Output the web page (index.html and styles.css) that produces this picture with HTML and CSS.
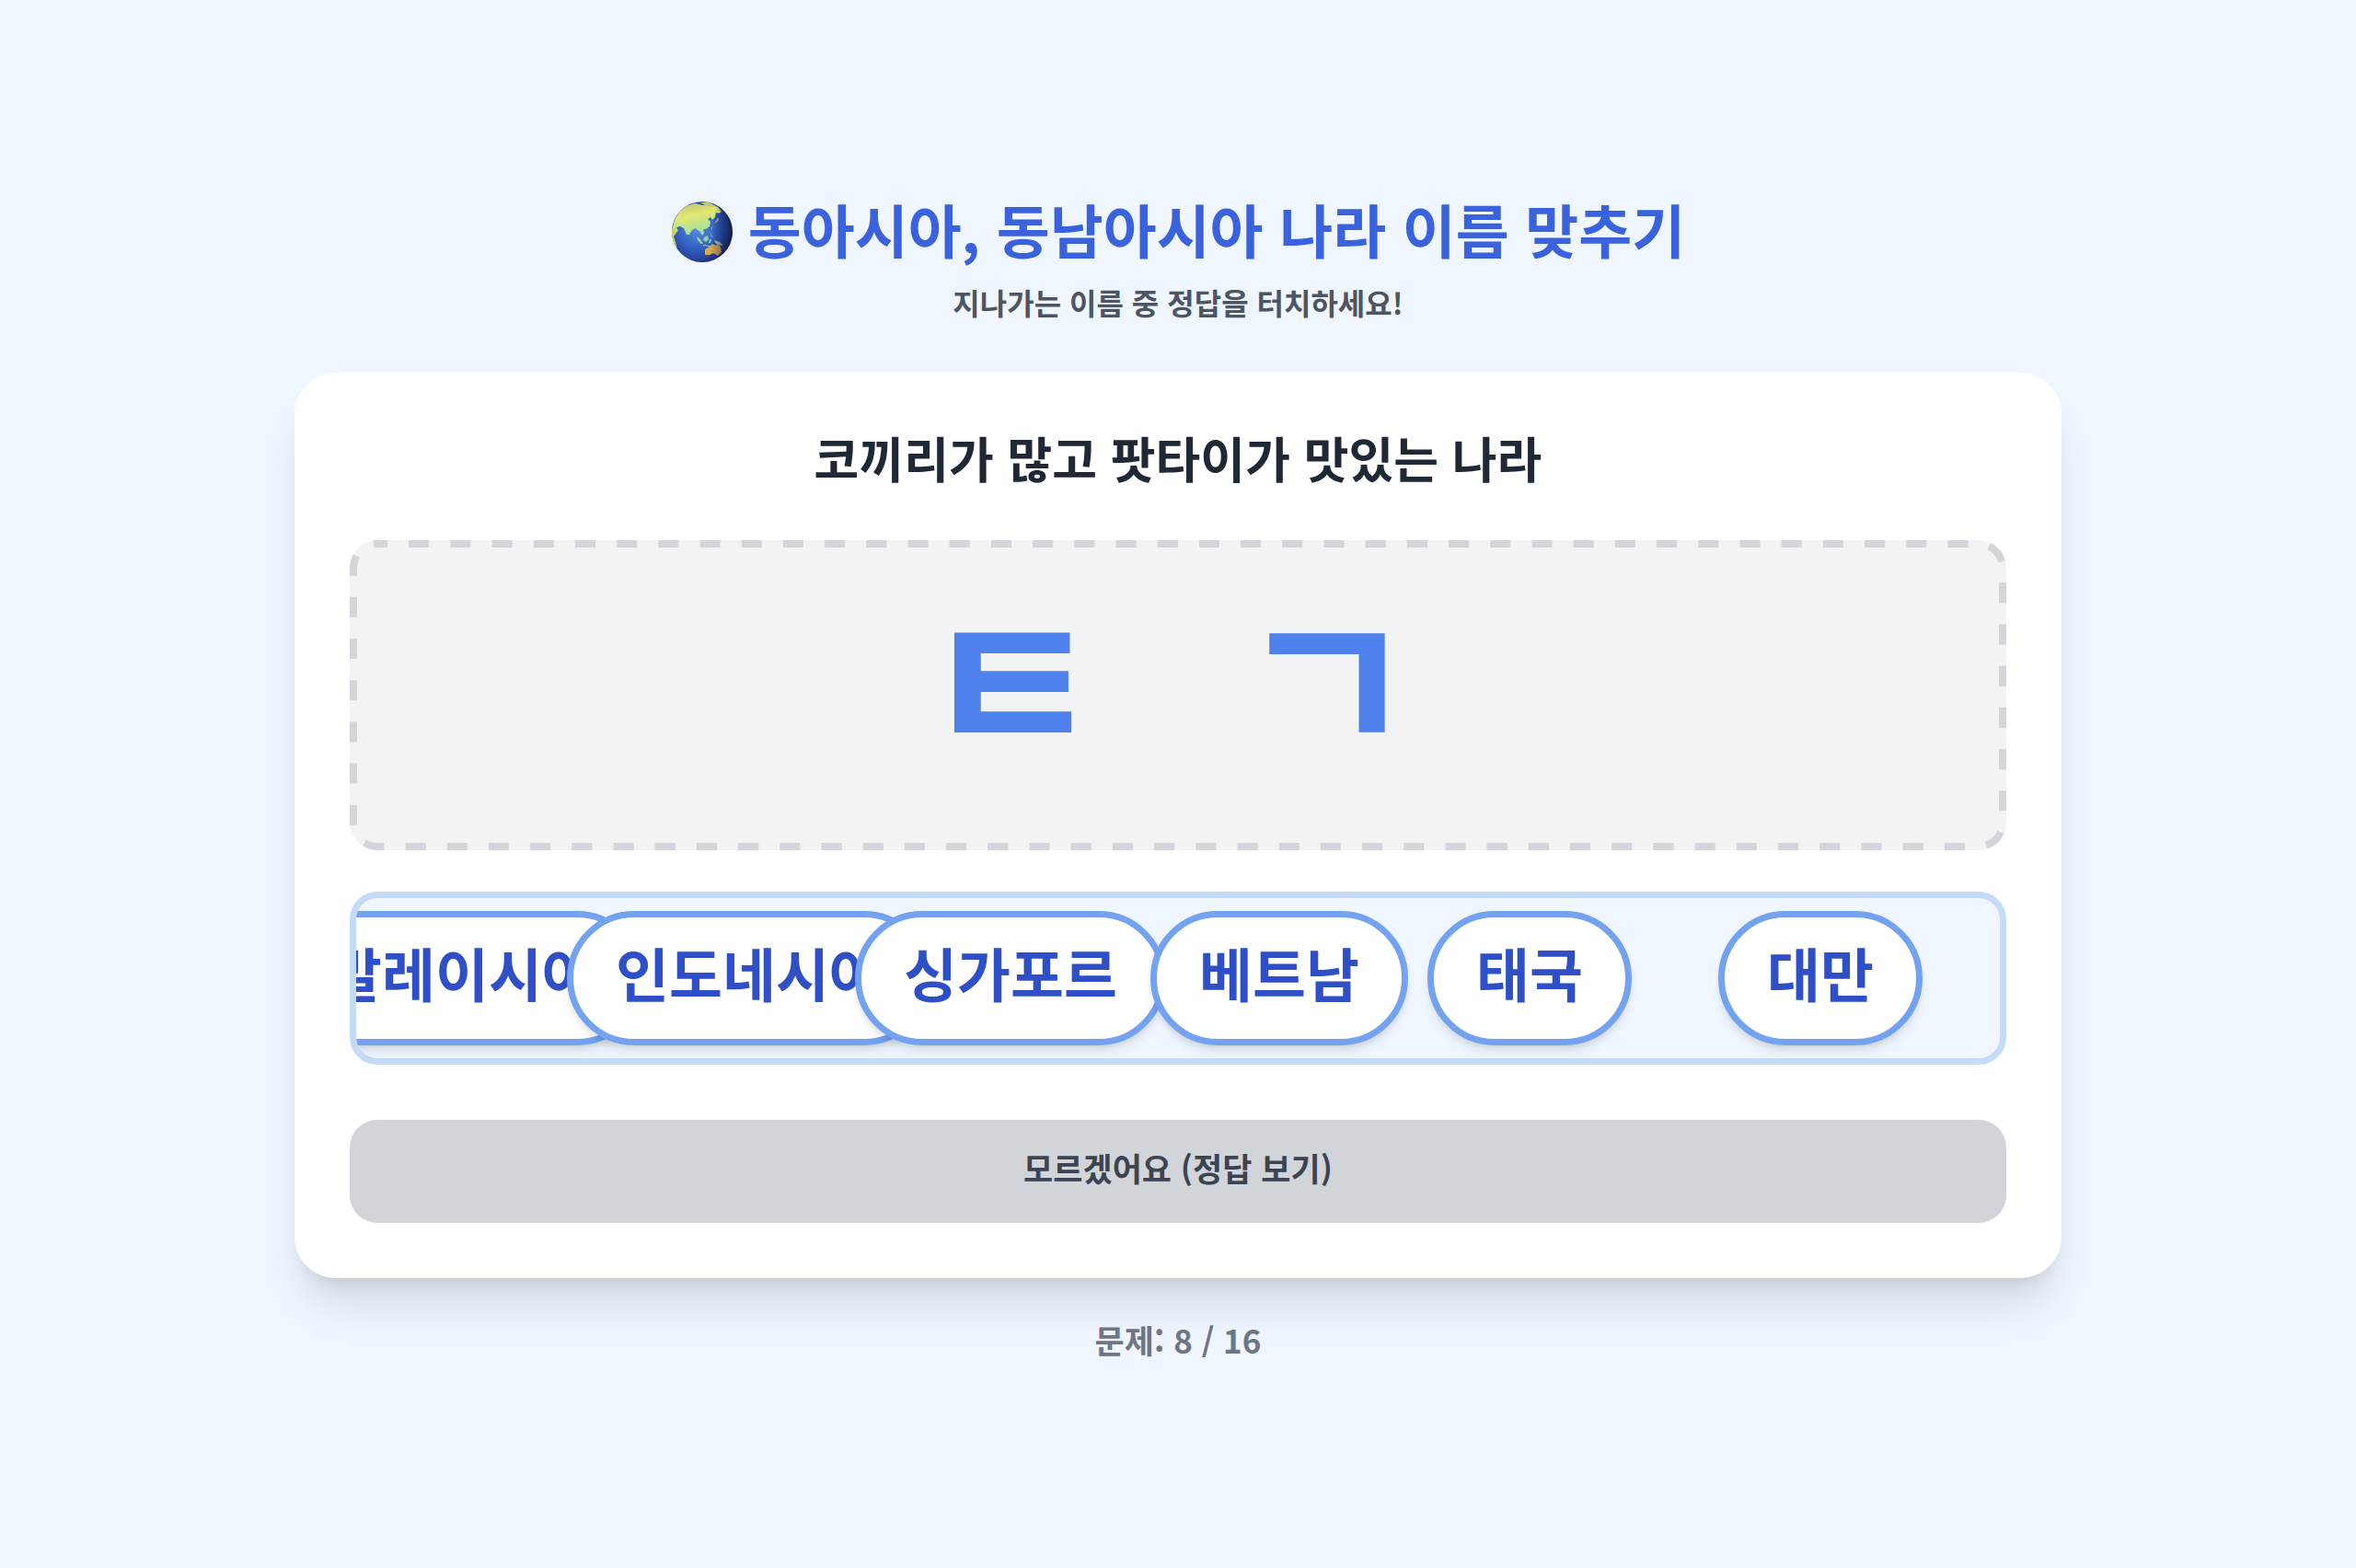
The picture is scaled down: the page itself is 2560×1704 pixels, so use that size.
FILE: index.html
```html
<!DOCTYPE html>
<html lang="ko">
<head>
<meta charset="utf-8">
<meta name="viewport" content="width=device-width, initial-scale=1">
<title>동아시아, 동남아시아 나라 이름 맞추기</title>
<link rel="stylesheet" href="styles.css">
</head>
<body>
<main class="game">
  <header class="intro">
    <h1 class="title">
      <svg class="globe" viewBox="0 0 66 66" aria-hidden="true">
        <defs>
          <radialGradient id="sea" cx="0.42" cy="0.45" r="0.6">
            <stop offset="0" stop-color="#5a8fdc"/>
            <stop offset="0.5" stop-color="#3564c4"/>
            <stop offset="0.82" stop-color="#2646a0"/>
            <stop offset="1" stop-color="#1c2259"/>
          </radialGradient>
          <linearGradient id="land" x1="0" y1="0" x2="0.35" y2="1">
            <stop offset="0" stop-color="#b9b777"/>
            <stop offset="0.45" stop-color="#e3e86f"/>
            <stop offset="1" stop-color="#9fe0a4"/>
          </linearGradient>
          <linearGradient id="shade" x1="0" y1="0" x2="1" y2="0.1">
            <stop offset="0.7" stop-color="#12183f" stop-opacity="0"/>
            <stop offset="1" stop-color="#12183f" stop-opacity="0.6"/>
          </linearGradient>
          <clipPath id="disc"><circle cx="33" cy="33" r="33"/></clipPath>
        </defs>
        <g clip-path="url(#disc)">
          <rect width="66" height="66" fill="url(#sea)"/>
          <path fill="url(#land)" d="M3 20 8 11 15 5 25 2 34 4 43 3 50 6 54 11 51 13 48 12 47 17 44 20 42 17 39 19 42 22 41 27 37 30 34 30 35 34 33 37 31 33 28 31 26 29 22 31 19 36 16 36 13 29 9 27 5 28 7 32 3 35 0 32Z"/>
          <path fill="#d3cf62" d="M0 29 4 30 5 34 2 38 4 44 6 52 2 49 0 42Z"/>
          <path fill="#bccb78" d="M31 1 40 1 48 5 45 6 36 4ZM50 17 51 20 48 23 46 24 49 20ZM43 27 44 29 43 31ZM41 32 43 36 45 39 43 38Z"/>
          <path fill="#93d3aa" d="M27 38 31 41 34 46 32 46 28 42ZM35 39 39 37 40 41 37 44 34 42ZM41 41 43 41 42 45 40 45ZM46 42 52 44 56 48 51 47 47 45ZM34 47 42 48 42 49 34 48Z"/>
          <path fill="#d9aa50" d="M36 52 41 49 44 46 48 48 50 45 53 50 54 55 50 59 45 56 41 58 36 58Z"/>
          <rect width="66" height="66" fill="url(#shade)"/>
        </g>
      </svg>
      <span>동아시아, 동남아시아 나라 이름 맞추기</span>
    </h1>
    <p class="subtitle">지나가는 이름 중 정답을 터치하세요!</p>
  </header>

  <section class="card">
    <h2 class="hint">코끼리가 많고 팟타이가 맛있는 나라</h2>
    <div class="initials">
      <svg class="dashes" aria-hidden="true"><rect class="dash-line" pathLength="4178"/></svg>
      <span>ㅌ</span>
      <span>ㄱ</span>
    </div>
    <div class="track">
      <button type="button" class="pill" style="left:-83px">말레이시아</button>
      <button type="button" class="pill" style="left:229px">인도네시아</button>
      <button type="button" class="pill" style="left:542px">싱가포르</button>
      <button type="button" class="pill" style="left:863px">베트남</button>
      <button type="button" class="pill" style="left:1164px">태국</button>
      <button type="button" class="pill" style="left:1480px">대만</button>
    </div>
    <button type="button" class="reveal">모르겠어요 (정답 보기)</button>
  </section>

  <p class="progress">문제: 8 / 16</p>
</main>
</body>
</html>
```
FILE: styles.css
```css
* {
  box-sizing: border-box;
}

body {
  margin: 0;
  background: #eff6ff;
  font-family: "Noto Sans CJK KR", "Noto Sans", sans-serif;
}

button {
  font-family: inherit;
  cursor: pointer;
}

.game {
  min-height: 100vh;
  padding: 60px;
  display: flex;
  flex-direction: column;
  align-items: center;
  justify-content: center;
}

.intro {
  margin-bottom: 53px;
  text-align: center;
}

.title {
  margin: 0 0 19px;
  display: flex;
  align-items: flex-start;
  justify-content: center;
  gap: 16px;
  color: #3b62dd;
  font-size: 63px;
  line-height: 62px;
  font-weight: 700;
}

.globe {
  width: 68px;
  height: 68px;
  padding-top: 2px;
  flex: none;
}

.subtitle {
  margin: 0;
  color: #4d5562;
  font-size: 32px;
  line-height: 48px;
  font-weight: 700;
}

.card {
  width: 100%;
  max-width: 1920px;
  padding: 60px;
  border-radius: 45px;
  background: #fff;
  box-shadow: 0 38px 47px -9px rgba(0, 0, 0, 0.1), 0 15px 19px -11px rgba(0, 0, 0, 0.12);
}

.hint {
  margin: 0 0 58px;
  color: #212835;
  font-size: 53px;
  line-height: 64px;
  font-weight: 700;
  text-align: center;
}

.initials {
  position: relative;
  min-height: 337px;
  margin-bottom: 45px;
  padding: 0 18px 52px 0;
  display: flex;
  align-items: center;
  justify-content: center;
  gap: 145px;
  border-radius: 30px;
  background: #f2f3f5;
  color: #4f81ec;
  font-size: 214px;
  line-height: 214px;
  font-weight: 700;
}

.dashes {
  position: absolute;
  inset: 4px;
  width: calc(100% - 8px);
  height: calc(100% - 8px);
  overflow: visible;
}

.dash-line {
  width: 100%;
  height: 100%;
  rx: 26px;
  fill: none;
  stroke: #d2d5da;
  stroke-width: 8px;
  stroke-dasharray: 22 23;
  stroke-dashoffset: 11px;
}

.track {
  position: relative;
  height: 188px;
  margin-bottom: 60px;
  border: 7px solid #c4daf9;
  border-radius: 30px;
  background: #eff6ff;
  overflow: hidden;
}

.pill {
  position: absolute;
  top: 14px;
  height: 146px;
  padding: 0 46px 14px;
  border: 7px solid #73a2f0;
  border-radius: 73px;
  background: #fff;
  box-shadow: 0 8px 11px -2px rgba(0, 0, 0, 0.1), 0 4px 7px -4px rgba(0, 0, 0, 0.1);
  color: #2f4fc6;
  font-size: 63px;
  line-height: 90px;
  font-weight: 700;
  white-space: nowrap;
}

.reveal {
  display: block;
  width: 100%;
  height: 112px;
  padding: 0 45px 8px;
  border: 0;
  border-radius: 30px;
  background: #d1d5da;
  color: #3c4453;
  font-size: 35px;
  line-height: 54px;
  font-weight: 700;
}

.progress {
  margin: 40px 0 4px;
  color: #6e7684;
  font-size: 35px;
  line-height: 54px;
  font-weight: 700;
}
```
